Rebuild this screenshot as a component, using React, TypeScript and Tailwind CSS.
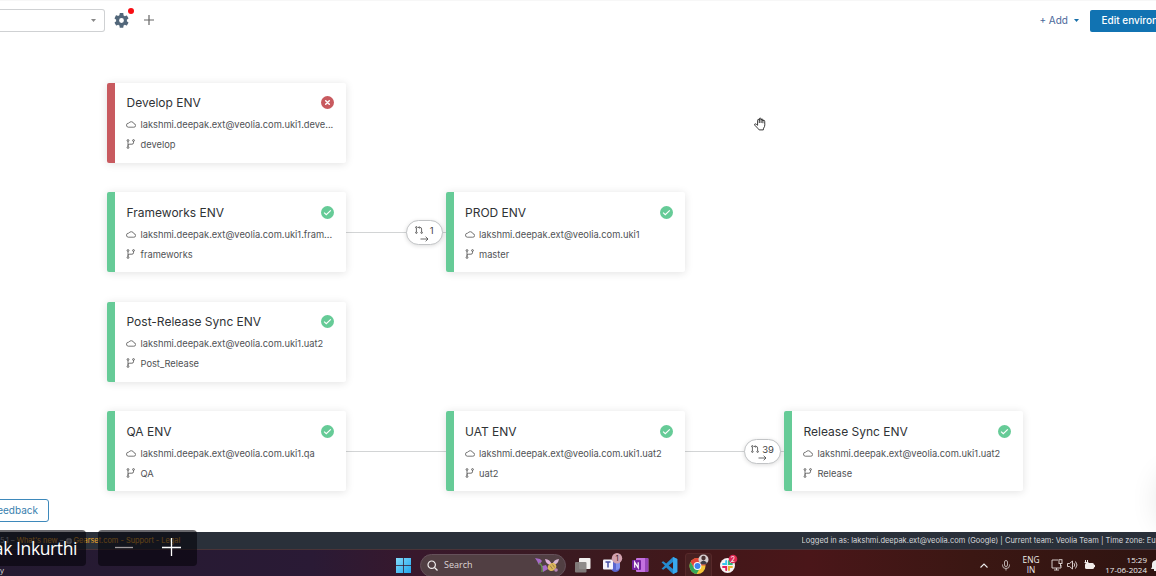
import React from "react";

type Env = { x: number; y: number; title: string; org: string; branch: string; failed?: boolean };

const envs: Env[] = [
  { x: 107, y: 43, title: "Develop ENV", org: "lakshmi.deepak.ext@veolia.com.uki1.deve...", branch: "develop", failed: true },
  { x: 107, y: 152.4, title: "Frameworks ENV", org: "lakshmi.deepak.ext@veolia.com.uki1.fram...", branch: "frameworks" },
  { x: 445.5, y: 152.4, title: "PROD ENV", org: "lakshmi.deepak.ext@veolia.com.uki1", branch: "master" },
  { x: 107, y: 262, title: "Post-Release Sync ENV", org: "lakshmi.deepak.ext@veolia.com.uki1.uat2", branch: "Post_Release" },
  { x: 107, y: 371.4, title: "QA ENV", org: "lakshmi.deepak.ext@veolia.com.uki1.qa", branch: "QA" },
  { x: 445.5, y: 371.4, title: "UAT ENV", org: "lakshmi.deepak.ext@veolia.com.uki1.uat2", branch: "uat2" },
  { x: 784, y: 371.4, title: "Release Sync ENV", org: "lakshmi.deepak.ext@veolia.com.uki1.uat2", branch: "Release" },
];

const links = [
  { x: 346, y: 192 },
  { x: 346, y: 411 },
  { x: 685, y: 411 },
];

const pills = [
  { x: 405.5, y: 180, count: "1" },
  { x: 744, y: 399, count: "39" },
];

function Status({ failed }: { failed?: boolean }) {
  return (
    <svg className="mb-[1px] size-[13px] shrink-0" viewBox="0 0 13 13" fill="none">
      <circle cx="6.5" cy="6.5" r="6.5" fill={failed ? "#c85a5f" : "#66cb97"} />
      {failed ? (
        <path d="M4.7 4.7l3.6 3.6M8.3 4.7L4.7 8.3" stroke="#fff" strokeWidth="1.5" strokeLinecap="round" />
      ) : (
        <path d="M3.1 6.6l2.2 2.1 4.5-4.3" stroke="#fff" strokeWidth="1.2" />
      )}
    </svg>
  );
}

function Cloud() {
  return (
    <svg className="-ml-[0.5px] mb-[2px] h-[8px] w-[10px] shrink-0" viewBox="0 0 10 8" fill="none" stroke="#555" strokeWidth="0.8">
      <path d="M2.3 7.2h5.5a1.7 1.7 0 0 0 .2-3.4A2.9 2.9 0 0 0 2.7 3.2 2 2 0 0 0 2.3 7.2z" />
    </svg>
  );
}

function Branch() {
  return (
    <svg className="-ml-[0.5px] mb-[2px] h-[10px] w-[10px] shrink-0" viewBox="0 0 10 10" fill="none" stroke="#4a4a4a" strokeWidth="0.8">
      <circle cx="2" cy="1.5" r="0.9" />
      <circle cx="2" cy="8.5" r="0.9" />
      <circle cx="7.5" cy="1.5" r="0.9" />
      <path d="M2 2.4v5.2M7.5 2.4v1.4q0 1.4-1.6 1.4H3.7q-1.7 0-1.7 1.5" />
    </svg>
  );
}

function EnvCard({ env }: { env: Env }) {
  return (
    <div
      className="absolute flex h-[79.5px] w-[239px] rounded-[2px] bg-white shadow-[0_1px_9px_rgba(0,0,0,0.12)]"
      style={{ left: env.x, top: env.y }}
    >
      <div className={`w-[8px] shrink-0 rounded-l-[2px] ${env.failed ? "bg-[#c85a5f]" : "bg-[#66cb97]"}`} />
      <div className="flex min-w-0 flex-1 flex-col pl-[11.5px] pr-[12px] pt-[11.3px]">
        <div className="flex h-[18px] items-center justify-between text-[12px] text-[#303336]">
          <span className="whitespace-nowrap">{env.title}</span>
          <Status failed={env.failed} />
        </div>
        <div className="mt-[5px] flex h-[16px] items-center gap-[4.5px] text-[9.3px] text-[#505255]">
          <Cloud />
          <span className="whitespace-nowrap">{env.org}</span>
        </div>
        <div className="mt-[4px] flex h-[16px] items-center gap-[4.5px] text-[9.3px] text-[#505255]">
          <Branch />
          <span>{env.branch}</span>
        </div>
      </div>
    </div>
  );
}

function Pill({ x, y, count }: { x: number; y: number; count: string }) {
  return (
    <div
      className="absolute flex h-[24.5px] w-[37px] flex-col items-center rounded-full border border-[#c2c4c6] bg-white pt-[4px] text-[9.5px] text-[#444] shadow-[0_1px_4px_rgba(0,0,0,0.14)]"
      style={{ left: x, top: y }}
    >
      <div className={`flex h-[11px] items-start justify-between leading-[11px] ${count.length > 1 ? "w-[23px]" : "w-[19px]"}`}>
        <svg className="mt-[1px] size-[8px]" viewBox="0 0 8 8" fill="none" stroke="#444" strokeWidth="0.8">
          <circle cx="1.4" cy="1.4" r="0.8" />
          <circle cx="1.4" cy="6.6" r="0.8" />
          <circle cx="6.6" cy="6.6" r="0.8" />
          <path d="M1.4 2.2v3.6M6.6 5.8V3q0-1.6-1.6-1.6H3.5M4.5.3L3.4 1.4l1.1 1.1" />
        </svg>
        <span>{count}</span>
      </div>
      <svg className="h-[6px] w-[9px] shrink-0" viewBox="0 0 9 6" fill="none" stroke="#444" strokeWidth="0.8">
        <path d="M.5 3h7.5M5.6.7L8 3 5.6 5.3" />
      </svg>
    </div>
  );
}

function Header() {
  return (
    <header className="flex h-[40px] shrink-0 items-center border-t border-[#f7f7f7] text-[10px]">
      <div className="flex h-[23px] w-[105px] items-center justify-end rounded-r-[3px] border border-l-0 border-[#cfd1d3] pr-[8px]">
        <svg className="h-[3px] w-[5px]" viewBox="0 0 5 3"><path d="M0 0h5L2.5 3z" fill="#888" /></svg>
      </div>
      <div className="relative ml-[9px] size-[15px]">
        <svg className="size-[15px]" viewBox="2 2 20 20" fill="#52677a">
          <path d="M19.14 12.94c.04-.3.06-.61.06-.94s-.02-.64-.07-.94l2.03-1.58a.49.49 0 0 0 .12-.61l-1.92-3.32a.49.49 0 0 0-.59-.22l-2.39.96a7 7 0 0 0-1.62-.94l-.36-2.54A.48.48 0 0 0 13.92 2h-3.84a.48.48 0 0 0-.48.41l-.36 2.54a7.4 7.4 0 0 0-1.62.94l-2.39-.96a.49.49 0 0 0-.59.22L2.72 8.87a.48.48 0 0 0 .12.61l2.03 1.58a7.5 7.5 0 0 0 0 1.88l-2.03 1.58a.49.49 0 0 0-.12.61l1.92 3.32c.12.22.37.29.59.22l2.39-.96c.5.38 1.03.7 1.62.94l.36 2.54c.05.24.24.41.48.41h3.84c.24 0 .44-.17.47-.41l.36-2.54a7 7 0 0 0 1.63-.94l2.39.96c.22.08.47 0 .59-.22l1.92-3.32a.48.48 0 0 0-.12-.61zM12 15.2a3.2 3.2 0 1 1 0-6.4 3.2 3.2 0 0 1 0 6.4z" />
        </svg>
        <span className="absolute -right-[5px] -top-[5px] size-[6px] rounded-full bg-[#f80d13]" />
      </div>
      <svg className="mb-[1px] ml-[15px] size-[10px]" viewBox="0 0 10 10" stroke="#666" strokeWidth="1.2"><path d="M5 0v10M0 5h10" /></svg>
      <div className="ml-auto flex items-center gap-[6px] text-[#48689a]">
        <span>+ Add</span>
        <svg className="h-[3px] w-[5px]" viewBox="0 0 5 3"><path d="M0 0h5L2.5 3z" fill="#176fa9" /></svg>
      </div>
      <button className="ml-[11px] h-[22px] w-[66px] overflow-hidden whitespace-nowrap rounded-l-[2px] bg-[#1173b2] pl-[11.5px] text-left font-medium text-white">
        Edit environments
      </button>
    </header>
  );
}

function Hand() {
  return (
    <svg className="absolute left-[754px] top-[77px] h-[14px] w-[13px]" viewBox="0 0 13 14" fill="#fff" stroke="#222" strokeWidth="0.9" strokeLinejoin="round" strokeLinecap="round">
      <path d="M3.6 7.9V3.4q0-1 .8-1 .7 0 .9.9V2q.1-.9.9-.9t.9.9v.9q.2-.9.9-.9.9 0 .9 1v1q.2-.7.9-.7.9 0 .9 1l.1 3.5q0 2-1.2 3.4L9.3 12.9H5.2L3.7 11.2.7 8.1q-.5-.9.2-1.2.7-.2 1.3.3z" />
      <path d="M5.3 3v2.6M7.1 2.6v3M8.9 3.4v2.4" />
    </svg>
  );
}

function Taskbar() {
  return (
    <div className="flex h-[27px] shrink-0 items-center overflow-hidden border-t border-[#4a3338] bg-[linear-gradient(90deg,#241a31_0%,#2a1a35_27%,#38182c_36%,#3b1a20_50%,#431719_62%,#4a1619_70%,#3b1713_84%,#2f1411_100%)] pt-[4px] text-[9px] text-[#eee]">
      <svg className="ml-[396px] size-[15px] shrink-0" viewBox="0 0 16 16">
        <defs><linearGradient id="win" x2="1" y2="1"><stop stopColor="#83dcfb" /><stop offset="1" stopColor="#20a6ed" /></linearGradient></defs>
        <path d="M0 0h7.5v7.5H0zM8.3 0H16v7.5H8.3zM0 8.3h7.5V16H0zM8.3 8.3H16V16H8.3z" fill="url(#win)" />
      </svg>
      <div className="ml-[9px] flex h-[23px] w-[146px] shrink-0 items-center rounded-full border border-[#65515a] bg-[#513f43] pl-[6px] pr-[5px]">
        <svg className="size-[11px]" viewBox="0 0 11 11" fill="none" stroke="#f1eeee" strokeWidth="1.2"><circle cx="4.7" cy="4.7" r="3.7" /><path d="M7.5 7.5l3 3" /></svg>
        <span className="ml-[6px] font-['Open_Sans',sans-serif] text-[9px] text-[#ddd5d6]">Search</span>
        <svg className="ml-auto h-[16px] w-[26px]" viewBox="0 0 24 16">
          <path d="M0 1l5 1 2 2-3 4-2-4zM7 9l4-1 2 4-5 3z" fill="#a56ac7" />
          <path d="M4 6q4 2 3 9" stroke="#65984c" strokeWidth="1.3" fill="none" />
          <path d="M10 2q5 0 7 6-6 0-7-6z" fill="#dfb3da" /><path d="M17 8q2-6 7-6-1 6-7 6z" fill="#d6b6d2" />
          <ellipse cx="17" cy="10" rx="4.5" ry="3.8" transform="rotate(-30 17 10)" fill="#dab75b" /><path d="M15 8.500l2.500 3.500M17.500 7.500l2.200 3" stroke="#8a6c48" strokeWidth="0.8" />
          <circle cx="21" cy="13" r="1.8" fill="#b785b9" />
        </svg>
      </div>
      <svg className="ml-[8px] h-[15px] w-[17px] shrink-0" viewBox="0 0 17 15"><rect x="5" y="0" width="11.5" height="11" rx="1" fill="#f2f0ef" /><rect x="1" y="4" width="11.5" height="10.5" rx="1" fill="#878281" fillOpacity=".92" /></svg>
      <svg className="ml-[12px] h-[20px] w-[20px] shrink-0 -translate-y-[2px]" viewBox="0 0 20 20">
        <path d="M8 7h9v8q-1 4-5 4-4-1-4-4z" fill="#5b66cf" /><path d="M13 8h4v6q-1 3-4 3z" fill="#8090ed" />
        <rect x="0" y="6.5" width="10" height="10" rx="1" fill="#f4f4fc" /><path d="M2.5 9h5M5 9v5.5" stroke="#4650a5" strokeWidth="1.5" />
        <circle cx="14" cy="5.3" r="5.2" fill="#d1a1ae" /><text x="14" y="8" textAnchor="middle" fontSize="7.5" fontFamily="Inter" fill="#392129">1</text>
      </svg>
      <svg className="ml-[9px] h-[16px] w-[17px] shrink-0" viewBox="0 0 17 16"><rect x="4" y="1" width="12.5" height="14" rx="1" fill="#c471df" /><path d="M13 1h3v14h-3z" fill="#9845ba" /><rect x="0" y="3" width="9" height="10" rx="1" fill="#7521a0" /><path d="M2.7 10.8V5.2l3.5 5.6V5.2" stroke="#fff" strokeWidth="1.2" fill="none" /></svg>
      <svg className="ml-[12px] size-[17px] shrink-0" viewBox="0 0 24 24"><path d="M17 0L7.4 9.2 3.1 6 .8 7.3 5.5 12 .8 16.7 3.1 18l4.3-3.2L17 24l6-2.8V2.8zM17 7v10l-6.2-5z" fill="#258bd0" /><path d="M17 0v24l6-2.8V2.8z" fill="#39a9ef" /></svg>
      <div className="ml-[7px] flex h-[25px] w-[27px] shrink-0 items-center justify-center rounded-t-[3px] border border-[#57292a] bg-[#472021]">
        <svg className="size-[21px] shrink-0 -translate-y-px" viewBox="0 0 21 21">
          <circle cx="9.5" cy="12" r="8" fill="#f4c639" /><path d="M2.6 8A8 8 0 0 1 17.5 11.5H9.5L6 14z" fill="#e3473b" /><path d="M2.6 8A8 8 0 0 0 8.5 20l3.5-6H6z" fill="#34a85a" />
          <circle cx="9.5" cy="12" r="3.9" fill="#fff" /><circle cx="9.5" cy="12" r="3" fill="#3d83ec" />
          <circle cx="15.5" cy="5.5" r="5" fill="#d7ced0" /><circle cx="15.5" cy="4" r="2.2" fill="#4b3433" /><path d="M12 9q3.500-5 7 0-3.500 3-7 0z" fill="#3e3d47" />
        </svg>
      </div>
      <svg className="ml-[7px] size-[20px] shrink-0 -translate-y-[1px]" viewBox="0 0 20 20">
        <circle cx="8.5" cy="11.5" r="7.5" fill="#f6f2f2" />
        <g strokeWidth="1.900" strokeLinecap="round" fill="none"><path d="M7.200 7v3H4" stroke="#36c5f0" /><path d="M10 7v3h3" stroke="#2eb67d" /><path d="M10 16v-3h3" stroke="#ecb22e" /><path d="M4 13h3.200v3" stroke="#e01e5a" /></g>
        <circle cx="14" cy="5" r="4.3" fill="#db2751" /><text x="14" y="7.5" textAnchor="middle" fontSize="7" fontFamily="Inter" fill="#fff">2</text>
      </svg>
      <div className="ml-auto flex shrink-0 items-center">
        <svg className="h-[5px] w-[8px]" viewBox="0 0 8 5" fill="none" stroke="#eee" strokeWidth="1.1"><path d="M.5 4.5L4 1l3.5 3.5" /></svg>
        <svg className="ml-[14px] h-[11px] w-[8px]" viewBox="0 0 8 11" fill="none" stroke="#c9bfbd" strokeWidth=".9"><rect x="2.5" y=".5" width="3" height="6" rx="1.5" /><path d="M.5 4.5v1a3.500 3 0 0 0 7 0v-1M4 8.5v2" /></svg>
        <div className="ml-[12px] w-[18px] text-center font-['Open_Sans',sans-serif] text-[8.3px] leading-[10.5px]">ENG<br />IN</div>
        <svg className="ml-[11px] h-[12px] w-[12px]" viewBox="0 0 12 12" fill="none" stroke="#e6dedc" strokeWidth=".9"><path d="M7 1H1v8h9V6M3 11h5M5.5 9v2" /><rect x="8" y=".7" width="3" height="3.8" /><path d="M9.5 4.5v3" /></svg>
        <svg className="ml-[4px] h-[10px] w-[11px]" viewBox="0 0 11 10" fill="none" stroke="#e6dedc" strokeWidth=".9"><path d="M.5 3.5h2l3-2.5v8l-3-2.5h-2zM7 3.2q1.500 1.800 0 3.600M8.500 1.500q3 3.500 0 7" /></svg>
        <svg className="ml-[6px] h-[10px] w-[12px]" viewBox="0 0 12 10"><rect x="1" y="3" width="9" height="6" rx="1.5" fill="#f1ecea" /><path d="M10.500 4.800v2.400M1.500 0v2M3.500 0v2M.5 2.500h4" stroke="#f1ecea" strokeWidth="1" /></svg>
        <div className="ml-[9px] w-[42px] whitespace-nowrap text-right font-['Open_Sans',sans-serif] text-[8px] leading-[10.5px]">15:29<br />17-06-2024</div>
        <svg className="ml-[4px] h-[11px] w-[5px]" viewBox="0 0 5 11"><path d="M0 9l1-2V4q0-3 4-4v11H3V9z" fill="#eee" /></svg>
      </div>
    </div>
  );
}

export default function App() {
  return (
    <div className="relative flex h-[576px] w-[1156px] flex-col overflow-hidden bg-white font-['Inter',sans-serif]">
      <Header />
      <main className="relative min-h-0 flex-1 overflow-hidden">
        {links.map((l, i) => (
          <div key={i} className="absolute h-px w-[100px] bg-[#d2d4d5]" style={{ left: l.x, top: l.y }} />
        ))}
        {envs.map((e) => <EnvCard key={e.title} env={e} />)}
        {pills.map((p) => <Pill key={p.count} {...p} />)}
        <Hand />
        <button className="absolute left-[-20px] top-[459px] h-[23px] w-[69px] rounded-[3px] border border-[#3e89bb] bg-white pr-[10px] text-right text-[10px] text-[#377fae]">Feedback</button>
        <div className="absolute -right-[44px] top-[432px] h-[56px] w-[40px] rounded-full shadow-[0_0_30px_rgba(0,0,0,0.12)]" />
      </main>
      <footer className="flex h-[17px] shrink-0 items-center whitespace-nowrap bg-[#2a303a] pt-[1px] text-[7.5px] text-[#d5d7da]">
        <div className="flex items-center text-[7.4px] text-[#eaa728]">
          <span className="text-[#b4b5b8]">5.1 –&nbsp;</span><span>What's new</span><span className="text-[#b4b5b8]">&nbsp;–&nbsp;</span>
          <svg className="size-[6px]" viewBox="0 0 6 6"><circle cx="3" cy="3" r="3" fill="#b4b5b8" /><path d="M0 3h6M3 0v6" stroke="#2a303a" strokeWidth=".5" /></svg>
          <span>&nbsp;Gearset.com</span><span>&nbsp;- Support - Legal</span>
        </div>
        <div className="ml-auto w-[354.5px] overflow-hidden">Logged in as: lakshmi.deepak.ext@veolia.com (Google) | Current team: Veolia Team | Time zone: Europe</div>
      </footer>
      <Taskbar />
      <div className="absolute left-[-6px] top-[530px] h-[36px] w-[92px] rounded-[4px] bg-[#05040a]/60">
        <div className="flex h-full items-center justify-end whitespace-nowrap pr-[9px] pt-px font-['Open_Sans',sans-serif] text-[17.5px] tracking-[-0.4px] text-white">Deepak Inkurthi</div>
      </div>
      <div className="absolute left-[98px] top-[530px] flex h-[36px] w-[99px] items-center rounded-[4px] bg-[#05040a]/60 pl-[17px]">
        <svg className="h-[20px] w-[66px]" viewBox="0 0 66 20"><path d="M0 9.5h18" stroke="#a09b9d" strokeWidth="1.3" /><path d="M47 9.5h19M56.5 0v18" stroke="#fff" strokeWidth="1.3" /></svg>
      </div>
      <span className="absolute bottom-0 left-0 font-['Open_Sans',sans-serif] text-[8px] leading-[12px] text-[#ddd]">y</span>
    </div>
  );
}
